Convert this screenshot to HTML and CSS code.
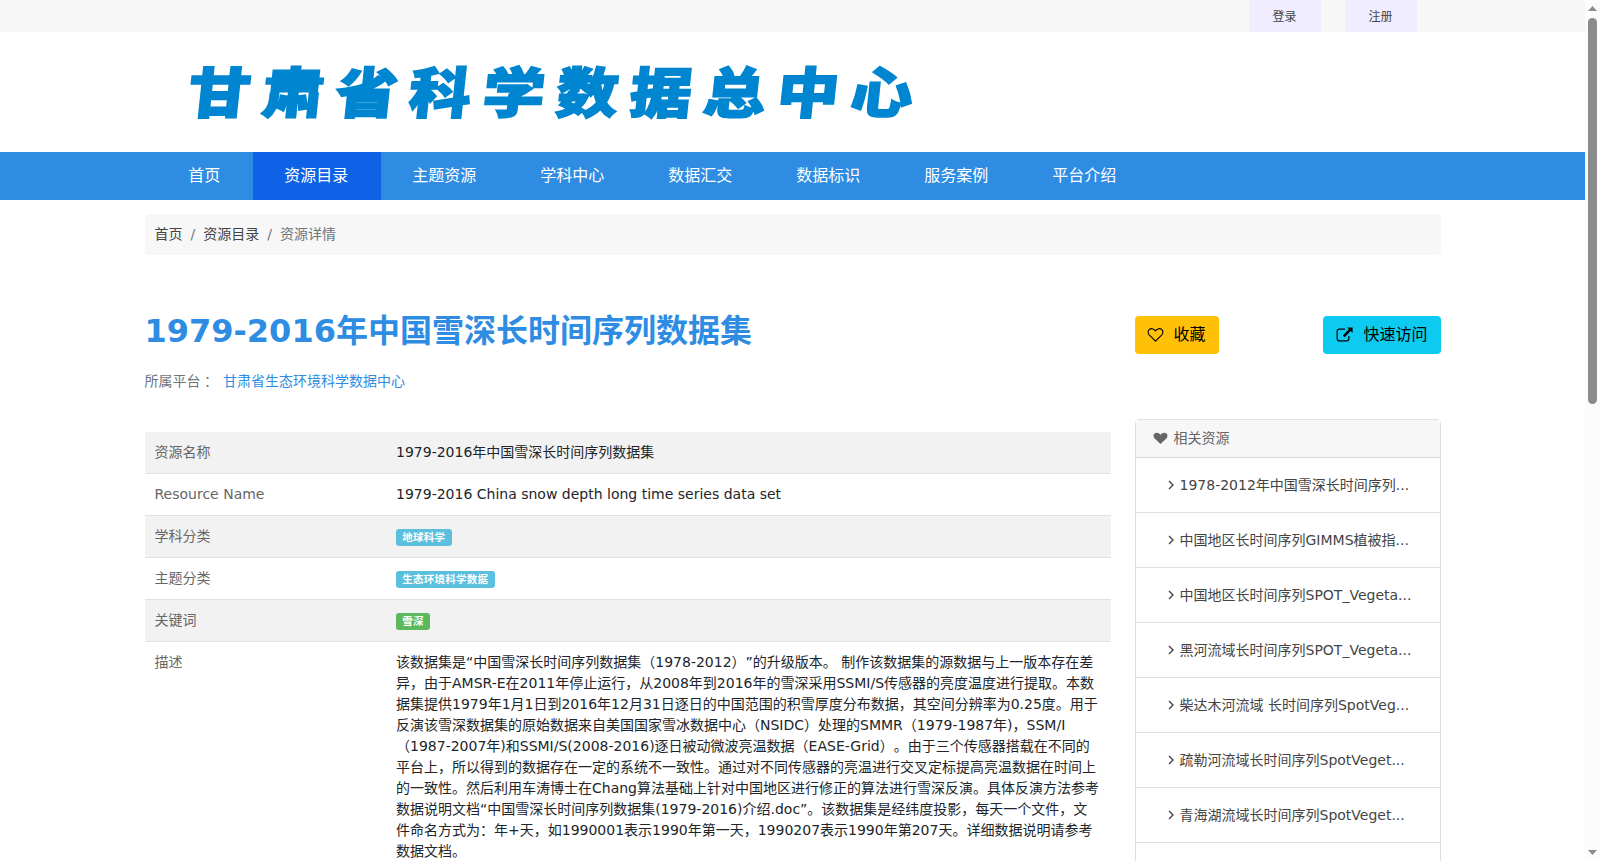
FILE: index.html
```html
<!DOCTYPE html>
<html lang="zh-CN">
<head>
<meta charset="utf-8">
<title>1979-2016年中国雪深长时间序列数据集</title>
<link rel="stylesheet" href="styles.css">
</head>
<body>
<svg class="defs" width="0" height="0">
  <symbol id="chev" viewBox="0 0 6 10"><path d="M1 1l4 4-4 4" fill="none" stroke="currentColor" stroke-width="1.4"/></symbol>
</svg>
<div class="page">
  <div class="topbar"><div class="container topbar-inner"><a class="account">登录</a><a class="account">注册</a></div></div>
  <header class="container brand"><div class="logo">甘肃省科学数据总中心</div></header>
  <nav class="nav"><div class="container nav-inner">
    <a>首页</a><a class="active">资源目录</a><a>主题资源</a><a>学科中心</a><a>数据汇交</a><a>数据标识</a><a>服务案例</a><a>平台介绍</a>
  </div></nav>
  <main class="container">
    <div class="breadcrumb"><a>首页</a><span class="sep">/</span><a>资源目录</a><span class="sep">/</span><span>资源详情</span></div>
    <div class="columns">
      <section class="content">
        <h1>1979-2016年中国雪深长时间序列数据集</h1>
        <p class="platform">所属平台<span lang="zh-TW" class="colon">：</span> <a>甘肃省生态环境科学数据中心</a></p>
        <table>
          <tr><th>资源名称</th><td>1979-2016年中国雪深长时间序列数据集</td></tr>
          <tr><th>Resource Name</th><td>1979-2016 China snow depth long time series data set</td></tr>
          <tr><th>学科分类</th><td><span class="label info">地球科学</span></td></tr>
          <tr><th>主题分类</th><td><span class="label info">生态环境科学数据</span></td></tr>
          <tr><th>关键词</th><td><span class="label success">雪深</span></td></tr>
          <tr><th>描述</th><td class="desc">该数据集是“中国雪深长时间序列数据集（1978-2012）”的升级版本。 制作该数据集的源数据与上一版本存在差<br>异，由于AMSR-E在2011年停止运行，从2008年到2016年的雪深采用SSMI/S传感器的亮度温度进行提取。本数<br>据集提供1979年1月1日到2016年12月31日逐日的中国范围的积雪厚度分布数据，其空间分辨率为0.25度。用于<br>反演该雪深数据集的原始数据来自美国国家雪冰数据中心（NSIDC）处理的SMMR（1979-1987年)，SSM/I<br>（1987-2007年)和SSMI/S(2008-2016)逐日被动微波亮温数据（EASE-Grid）。由于三个传感器搭载在不同的<br>平台上，所以得到的数据存在一定的系统不一致性。通过对不同传感器的亮温进行交叉定标提高亮温数据在时间上<br>的一致性。然后利用车涛博士在Chang算法基础上针对中国地区进行修正的算法进行雪深反演。具体反演方法参考<br>数据说明文档“中国雪深长时间序列数据集(1979-2016)介绍.doc”。该数据集是经纬度投影，每天一个文件，文<br>件命名方式为：年+天，如1990001表示1990年第一天，1990207表示1990年第207天。详细数据说明请参考<br>数据文档。</td></tr>
        </table>
      </section>
      <aside class="side">
        <div class="actions">
          <a class="btn warning"><svg width="17" height="16" viewBox="0 0 16 16"><path d="M8 14.2L1.900 8.200C.200 6.400.300 3.800 1.600 2.600 3.400 1 6 1.300 8 3.900 10 1.300 12.600 1 14.400 2.600 15.700 3.800 15.800 6.400 14.100 8.200z" fill="none" stroke="currentColor" stroke-width="1.100" stroke-linejoin="round"/></svg><span>收藏</span></a>
          <a class="btn cyan"><svg width="17" height="16" viewBox="0 0 17 16"><path d="M9 2.100H3.400A2.300 2.300 0 0 0 1.100 4.400v7.200a2.300 2.300 0 0 0 2.300 2.300h7.200a2.300 2.300 0 0 0 2.300-2.300V9" fill="none" stroke="currentColor" stroke-width="1.200"/><path d="M11 .400h5.600v5.600l-1.900-1.900-6.100 6.100-1.800-1.800L12.900 2.300z" fill="currentColor"/></svg><span>快速访问</span></a>
        </div>
        <div class="card">
          <div class="card-head"><svg width="15" height="13" viewBox="0 0 16 14"><path d="M8 13L1.700 7.100C0 5.300.300 2.700 1.500 1.700 3.500 0 6.200.600 8 2.900 9.800.600 12.500 0 14.500 1.700 15.700 2.700 16 5.300 14.300 7.100z" fill="currentColor"/></svg><span>相关资源</span></div>
          <a class="item"><svg class="chev"><use href="#chev"/></svg>1978-2012年中国雪深长时间序列...</a>
          <a class="item"><svg class="chev"><use href="#chev"/></svg>中国地区长时间序列GIMMS植被指...</a>
          <a class="item"><svg class="chev"><use href="#chev"/></svg>中国地区长时间序列SPOT_Vegeta...</a>
          <a class="item"><svg class="chev"><use href="#chev"/></svg>黑河流域长时间序列SPOT_Vegeta...</a>
          <a class="item"><svg class="chev"><use href="#chev"/></svg>柴达木河流域 长时间序列SpotVeg...</a>
          <a class="item"><svg class="chev"><use href="#chev"/></svg>疏勒河流域长时间序列SpotVeget...</a>
          <a class="item"><svg class="chev"><use href="#chev"/></svg>青海湖流域长时间序列SpotVeget...</a>
          <div class="item"></div>
        </div>
      </aside>
    </div>
  </main>
</div>
<div class="scrollbar">
  <svg width="9" height="5" viewBox="0 0 9 5"><path d="M0 5L4.500 0 9 5z" fill="#8b8b8b"/></svg>
  <div class="thumb"></div>
  <svg class="down" width="9" height="5" viewBox="0 0 9 5"><path d="M0 0h9L4.500 5z" fill="#8b8b8b"/></svg>
</div>
</body>
</html>
```
FILE: styles.css
```css
* { box-sizing: border-box; }
body {
  margin: 0;
  height: 861px;
  display: flex;
  overflow: hidden;
  background: #fff;
  color: #212529;
  font: 14px/1.5 "DejaVu Sans", "Noto Sans CJK SC", sans-serif;
  text-spacing-trim: space-all;
}
.defs { position: absolute; }
.page { width: 1585px; height: 861px; overflow: hidden; flex: none; }
.container { width: 1320px; margin: 0 auto; padding: 0 12px; }
.topbar { height: 32px; background: #f7f7f7; }
.topbar-inner { display: flex; justify-content: flex-end; gap: 24px; padding-right: 36px; }
.account { width: 72px; height: 32px; line-height: 34px; text-align: center; font-size: 12px; color: #444; background: #efedff; }
.brand { height: 120px; padding: 13px 0 0 56px; }
.logo {
  font: 900 62px/88px "Noto Sans CJK SC", sans-serif;
  letter-spacing: 11.600px;
  color: #0085d0;
  -webkit-text-stroke: 1.800px #0085d0;
  white-space: nowrap;
  transform: skewX(-6deg) scaleY(.88);
}
.nav { height: 48px; background: #2e8ce3; }
.nav-inner { display: flex; padding-left: 24px; }
.nav a { height: 48px; padding: 0 32.300px 0 31.700px; font-size: 16px; line-height: 48px; color: #fff; }
.nav a.active { background: #0d62e6; }
.breadcrumb { display: flex; height: 41px; margin-top: 14px; padding: 10px; background: #f7f7f7; border-radius: 4px; color: #6c757d; }
.breadcrumb a { color: #444; }
.breadcrumb .sep { padding: 0 8px; }
.columns { display: flex; gap: 24px; margin-top: 56px; }
.content { width: 966px; }
h1 { margin: 1px 0 0; font-size: 32px; line-height: 38px; font-weight: 700; color: #2e8ce3; }
.platform { margin: 21px 0 0; color: #6c757d; }
.platform a { margin-left: 4px; color: #2e8ce3; }
.colon { display: inline-block; height: 21px; vertical-align: top; font-family: "Noto Sans CJK TC", sans-serif; }
table { width: 100%; margin-top: 40px; border-collapse: separate; border-spacing: 0; table-layout: fixed; }
th, td { padding: 10px; border-bottom: 1px solid #dee2e6; vertical-align: top; text-align: left; height: 42px; }
th { width: 241.500px; font-weight: 400; color: #666; }
tr:nth-child(odd) { background: #f2f2f2; }
tr:last-child { background: #fff; }
.desc { white-space: nowrap; }
.label { display: block; width: max-content; height: 17px; margin-top: 3px; padding: 0 6.300px; border-radius: 3px; font-size: 10.500px; line-height: 17px; letter-spacing: .25px; font-weight: 700; color: #fff; }
.info { background: #5bc0de; }
.success { background: #5cb85c; }
.side { width: 306px; }
.actions { display: flex; justify-content: space-between; margin-top: 5px; }
.btn { display: flex; align-items: center; height: 38px; padding: 0 13px 0 12px; gap: 10px; border-radius: 4px; font-size: 16px; color: #000; }
.warning { background: #ffc107; }
.cyan { padding-left: 13px; background: #0dcaf0; }
.card { margin-top: 65px; border: 1px solid #dfdfdf; border-radius: 4px; }
.card-head { display: flex; align-items: center; gap: 6px; height: 38px; padding-left: 17px; background: #f7f7f7; border-bottom: 1px solid #d9d9d9; color: #666; }
.item { display: flex; align-items: center; height: 55px; padding-left: 32px; border-bottom: 1px solid #dfdfdf; color: #444; white-space: nowrap; }
.chev { width: 6px; height: 10px; margin-right: 6px; }
.scrollbar { width: 15px; height: 861px; display: flex; flex-direction: column; align-items: center; padding: 6px 0; background: #fcfcfc; }
.thumb { width: 9px; height: 386px; margin-top: 7px; border-radius: 5px; background: #8b8b8b; }
.down { margin-top: auto; }
```
